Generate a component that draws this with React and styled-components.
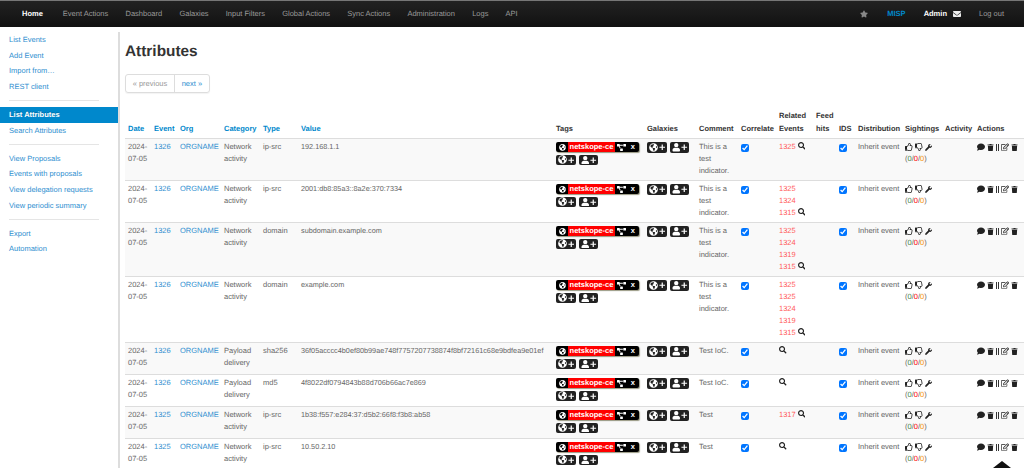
import React from 'react';
import styled, { createGlobalStyle } from 'styled-components';
import {
  FaGlobeAmericas, FaPlus, FaUser, FaStar, FaEnvelope, FaSearch, FaRegThumbsUp, FaRegThumbsDown,
  FaWrench, FaComment, FaTrash, FaRegEdit, FaProjectDiagram,
} from 'react-icons/fa';

const GlobalStyle = createGlobalStyle`
  html, body {
    margin: 0;
    height: 100%;
    overflow: hidden;
    background: #fff;
    font-family: 'Liberation Sans', Arial, sans-serif;
    font-size: 7.5px;
    line-height: 12px;
    color: #666;
    text-rendering: geometricPrecision;
  }
`;

const Page = styled.div`
  position: relative;
  width: 1024px;
  height: 468px;
  overflow: hidden;
`;

const Navbar = styled.nav`
  display: flex;
  align-items: center;
  height: 26px;
  padding: 0 20px 0 22px;
  border-top: 1px solid #777;
  background: linear-gradient(#222, #111);
  color: #999;
  box-sizing: content-box;
`;

const NavItem = styled.span`
  margin-right: ${(p) => (p.$active ? 20 : 17.2)}px;
  color: ${(p) => (p.$active ? '#fff' : '#999')};
  font-weight: ${(p) => (p.$active ? 'bold' : 'normal')};
`;

const NavRight = styled.div`
  display: flex;
  align-items: center;
  margin-left: auto;
  color: #999;
`;

const MispLabel = styled.span`
  margin: 0 18px 0 19px;
  color: #0088cc;
  font-weight: bold;
`;

const AdminLabel = styled.span`
  margin-right: 6px;
  color: #fff;
  font-weight: bold;
`;

const LogOut = styled.span`
  margin-left: 18px;
`;

const Body = styled.div`
  display: flex;
  align-items: flex-start;
`;

const Sidebar = styled.aside`
  flex: 0 0 118px;
  height: 441px;
  margin-top: 5px;
  border-right: 2px solid #ddd;
  box-sizing: content-box;
`;

const SideList = styled.div`
  display: flex;
  flex-direction: column;
`;

const SideLink = styled.a`
  display: block;
  height: 15.7px;
  line-height: 15.7px;
  padding-left: 9px;
  color: ${(p) => (p.$active ? '#fff' : '#2f8fd0')};
  background: ${(p) => (p.$active ? '#0088cc' : 'transparent')};
  font-weight: ${(p) => (p.$active ? 'bold' : 'normal')};
  text-shadow: ${(p) => (p.$active ? '0 -1px 0 rgba(0,0,0,.2)' : 'none')};
`;

const SideDivider = styled.div`
  height: 1px;
  margin: 5.5px 19px 5.8px 9px;
  background: #e5e5e5;
`;

const Content = styled.main`
  flex: 1;
  min-width: 0;
  padding-left: 5px;
`;

const Title = styled.h2`
  margin: 15px 0 0;
  font-size: 15.4px;
  line-height: 20px;
  font-weight: bold;
  color: #333;
`;

const Pager = styled.div`
  display: inline-flex;
  margin-top: 12px;
  border: 1px solid #ddd;
  border-radius: 3px;
  box-shadow: 0 1px 1px rgba(0, 0, 0, 0.05);
  vertical-align: top;
`;

const PagerItem = styled.span`
  display: block;
  height: 17px;
  line-height: 17px;
  padding: 0 6.7px;
  color: ${(p) => (p.$off ? '#999' : '#2f8fd0')};
  border-right: ${(p) => (p.$off ? '1px solid #ddd' : 'none')};
`;

const Table = styled.table`
  width: 899px;
  margin-top: 15px;
  border-collapse: collapse;
  table-layout: fixed;
`;

const Th = styled.th`
  box-sizing: border-box;
  width: ${(p) => p.$w}px;
  padding: 2px 3px 3px;
  line-height: 12.5px;
  text-align: left;
  vertical-align: bottom;
  font-weight: bold;
  color: ${(p) => (p.$sort ? '#0088cc' : '#333')};
`;

const Row = styled.tr`
  background: ${(p) => (p.$odd ? '#f9f9f9' : '#fff')};
  border-top: 1px solid #ddd;
`;

const Td = styled.td`
  padding: 2px 3px 3px;
  vertical-align: top;
  color: #666;
  white-space: ${(p) => (p.$nowrap ? 'nowrap' : 'normal')};
`;

const ValueCell = styled(Td)`
  font-size: 7.28px;
`;

const Link = styled.span`
  color: #2f8fd0;
`;

const RelatedLink = styled.div`
  color: #ff5a5a;
`;

const SearchGlyph = styled(FaSearch)`
  width: 7.5px;
  height: 7.5px;
  margin-left: ${(p) => (p.$alone ? '0' : '2px')};
  color: #222;
  vertical-align: -0.5px;
`;

const TagWrap = styled.div`
  display: flex;
  flex-wrap: wrap;
  gap: 2.5px 3px;
  padding: 1px 0 2px;
`;

const TagPill = styled.div`
  display: flex;
  align-items: center;
  width: 83px;
  height: 10px;
  border-radius: 2px;
  overflow: hidden;
  background: #000;
  color: #fff;
  box-shadow: 1px 1px 1px rgba(70, 70, 30, 0.55);
`;

const TagGlobe = styled.span`
  flex: 0 0 12px;
  display: flex;
  justify-content: center;
`;

const TagName = styled.span`
  flex: 0 0 47px;
  height: 10px;
  line-height: 10px;
  background: #ff0000;
  color: #fff;
  font-weight: bold;
  text-align: center;
  white-space: nowrap;
`;

const TagTail = styled.span`
  flex: 1;
  display: flex;
  align-items: center;
  justify-content: space-between;
  padding: 0 4px 0 2px;
  font-weight: bold;
  line-height: 10px;
`;

const AddButton = styled.span`
  display: flex;
  align-items: center;
  justify-content: center;
  gap: 1px;
  width: ${(p) => p.$w}px;
  height: 10.5px;
  border-radius: 2px;
  background: #222;
  color: #fff;
`;

const CheckBox = styled.input`
  display: block;
  width: 8px;
  height: 8px;
  margin: 3px 0 0;
  accent-color: #0075ff;
`;

const IconRow = styled.div`
  display: flex;
  align-items: center;
  gap: ${(p) => p.$gap}px;
  height: 12px;
  color: #222;
  white-space: nowrap;
`;

const Counts = styled.div`
  white-space: nowrap;
`;

const Good = styled.span`
  color: #468847;
`;

const Bad = styled.span`
  color: #ff0000;
`;

const Warn = styled.span`
  color: #f89406;
`;

const Bars = styled.span`
  display: block;
  width: 3px;
  height: 7px;
  border-left: 1px solid #333;
  border-right: 1px solid #333;
  box-sizing: border-box;
`;

const ScrollTop = styled.div`
  position: absolute;
  right: 13px;
  bottom: 0;
  width: 0;
  height: 0;
  border-left: 9px solid transparent;
  border-right: 9px solid transparent;
  border-bottom: 7px solid #111;
`;

const columns = [
  ['Date', 26, true], ['Event', 26, true], ['Org', 44, true], ['Category', 39, true], ['Type', 38, true],
  ['Value', 255, true], ['Tags', 91], ['Galaxies', 52], ['Comment', 42], ['Correlate', 38],
  ['Related Events', 37], ['Feed hits', 23], ['IDS', 19], ['Distribution', 47], ['Sightings', 40],
  ['Activity', 32], ['Actions', 50],
];

const rows = [
  { event: 1326, cat: 'Network activity', type: 'ip-src', value: '192.168.1.1', comment: 'This is a test indicator.', related: [1325] },
  { event: 1326, cat: 'Network activity', type: 'ip-src', value: '2001:db8:85a3::8a2e:370:7334', comment: 'This is a test indicator.', related: [1325, 1324, 1315] },
  { event: 1326, cat: 'Network activity', type: 'domain', value: 'subdomain.example.com', comment: 'This is a test indicator.', related: [1325, 1324, 1319, 1315] },
  { event: 1326, cat: 'Network activity', type: 'domain', value: 'example.com', comment: 'This is a test indicator.', related: [1325, 1325, 1324, 1319, 1315] },
  { event: 1326, cat: 'Payload delivery', type: 'sha256', value: '36f05acccc4b0ef80b99ae748f7757207738874f8bf72161c68e9bdfea9e01ef', comment: 'Test IoC.', related: [] },
  { event: 1326, cat: 'Payload delivery', type: 'md5', value: '4f8022df0794843b88d706b66ac7e869', comment: 'Test IoC.', related: [] },
  { event: 1325, cat: 'Network activity', type: 'ip-src', value: '1b38:f557:e284:37:d5b2:66f8:f3b8:ab58', comment: 'Test', related: [1317] },
  { event: 1325, cat: 'Network activity', type: 'ip-src', value: '10.50.2.10', comment: 'Test', related: [] },
];

const navItems = ['Event Actions', 'Dashboard', 'Galaxies', 'Input Filters', 'Global Actions', 'Sync Actions', 'Administration', 'Logs', 'API'];

function AddButtons() {
  return (
    <>
      <AddButton $w={20}><FaGlobeAmericas size={9} /><FaPlus size={6.5} /></AddButton>
      <AddButton $w={19}><FaUser size={8.5} /><FaPlus size={6.5} /></AddButton>
    </>
  );
}

function App() {
  return (
    <Page>
      <GlobalStyle />
      <Navbar>
        <NavItem $active>Home</NavItem>
        {navItems.map((n) => <NavItem key={n}>{n}</NavItem>)}
        <NavRight>
          <FaStar size={8} color="#888" />
          <MispLabel>MISP</MispLabel>
          <AdminLabel>Admin</AdminLabel>
          <FaEnvelope size={8} color="#eee" />
          <LogOut>Log out</LogOut>
        </NavRight>
      </Navbar>
      <Body>
        <Sidebar>
          <SideList>
            <SideLink>List Events</SideLink>
            <SideLink>Add Event</SideLink>
            <SideLink>Import from…</SideLink>
            <SideLink>REST client</SideLink>
            <SideDivider />
            <SideLink $active>List Attributes</SideLink>
            <SideLink>Search Attributes</SideLink>
            <SideDivider />
            <SideLink>View Proposals</SideLink>
            <SideLink>Events with proposals</SideLink>
            <SideLink>View delegation requests</SideLink>
            <SideLink>View periodic summary</SideLink>
            <SideDivider />
            <SideLink>Export</SideLink>
            <SideLink>Automation</SideLink>
          </SideList>
        </Sidebar>
        <Content>
          <Title>Attributes</Title>
          <Pager>
            <PagerItem $off>« previous</PagerItem>
            <PagerItem>next »</PagerItem>
          </Pager>
          <Table>
            <thead>
              <tr>
                {columns.map(([label, w, sort]) => <Th key={label} $w={w} $sort={sort}>{label}</Th>)}
              </tr>
            </thead>
            <tbody>
              {rows.map((r, i) => (
                <Row key={i} $odd={i % 2 === 0}>
                  <Td>2024-07-05</Td>
                  <Td><Link>{r.event}</Link></Td>
                  <Td><Link>ORGNAME</Link></Td>
                  <Td>{r.cat}</Td>
                  <Td>{r.type}</Td>
                  <ValueCell>{r.value}</ValueCell>
                  <Td>
                    <TagWrap>
                      <TagPill>
                        <TagGlobe><FaGlobeAmericas size={7} /></TagGlobe>
                        <TagName>netskope-ce</TagName>
                        <TagTail><FaProjectDiagram size={9} />x</TagTail>
                      </TagPill>
                      <AddButtons />
                    </TagWrap>
                  </Td>
                  <Td><TagWrap><AddButtons /></TagWrap></Td>
                  <Td>{r.comment}</Td>
                  <Td><CheckBox type="checkbox" checked readOnly /></Td>
                  <Td>
                    {r.related.map((n, j) => (
                      <RelatedLink key={j}>
                        {n}
                        {j === r.related.length - 1 && <SearchGlyph />}
                      </RelatedLink>
                    ))}
                    {r.related.length === 0 && <SearchGlyph $alone />}
                  </Td>
                  <Td />
                  <Td><CheckBox type="checkbox" checked readOnly /></Td>
                  <Td $nowrap>Inherit event</Td>
                  <Td>
                    <IconRow $gap={2}>
                      <FaRegThumbsUp size={8} />
                      <FaRegThumbsDown size={8} />
                      <FaWrench size={7} />
                    </IconRow>
                    <Counts>(<Good>0</Good>/<Bad>0</Bad>/<Warn>0</Warn>)</Counts>
                  </Td>
                  <Td />
                  <Td>
                    <IconRow $gap={2}>
                      <FaComment size={8} />
                      <FaTrash size={7} />
                      <Bars />
                      <FaRegEdit size={8} />
                      <FaTrash size={7} />
                    </IconRow>
                  </Td>
                </Row>
              ))}
            </tbody>
          </Table>
        </Content>
      </Body>
      <ScrollTop />
    </Page>
  );
}

export default App;
